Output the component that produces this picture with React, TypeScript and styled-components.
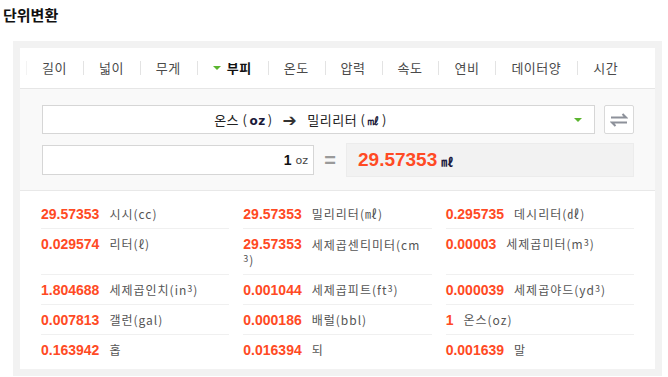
import React from 'react'
import styled, { createGlobalStyle } from 'styled-components'

const GlobalStyle = createGlobalStyle`
body {
  margin: 0;
  background: #fff;
  font-family: "Noto Sans CJK KR", "Liberation Sans", sans-serif;
  color: #333;
}
`

const Sup = styled.sup`
font-size: 9px;
line-height: 0;
vertical-align: 3px;
`

interface Result {
  value: string;
  label: React.ReactNode;
  wraps?: boolean;
}

const tabs = ['길이', '넓이', '무게', '부피', '온도', '압력', '속도', '연비', '데이터양', '시간']

const results: Result[] = [
  { value: '29.57353', label: '시시(cc)' },
  { value: '29.57353', label: '밀리리터(㎖)' },
  { value: '0.295735', label: '데시리터(㎗)' },
  { value: '0.029574', label: '리터(ℓ)' },
  { value: '29.57353', label: <>세제곱센티미터(cm<br /><Sup>3</Sup>)</>, wraps: true },
  { value: '0.00003', label: <>세제곱미터(m<Sup>3</Sup>)</> },
  { value: '1.804688', label: <>세제곱인치(in<Sup>3</Sup>)</> },
  { value: '0.001044', label: <>세제곱피트(ft<Sup>3</Sup>)</> },
  { value: '0.000039', label: <>세제곱야드(yd<Sup>3</Sup>)</> },
  { value: '0.007813', label: '갤런(gal)' },
  { value: '0.000186', label: '배럴(bbl)' },
  { value: '1', label: '온스(oz)' },
  { value: '0.163942', label: '홉' },
  { value: '0.016394', label: '되' },
  { value: '0.001639', label: '말' },
]

const SwapIcon = () => (
  <svg width="18" height="14" viewBox="0 0 18 14" fill="none">
    <path d="M1 4.5H16L12.5 1" stroke="#8d919a" strokeWidth="2" />
    <path d="M17 9.5H2L5.5 13" stroke="#8d919a" strokeWidth="2" />
  </svg>
)

const App: React.FC = () => {
  const lastRow = results.length - 3
  return (
    <>
      <GlobalStyle />
      <Title>단위변환</Title>
      <Frame>
        <Panel>
          <TabBar>
            {tabs.map((t, i) => (
              <Tab key={t} $active={t === '부피'} $first={i === 0}>
                {t === '부피' && <Caret />}
                {t}
              </Tab>
            ))}
          </TabBar>

          <Converter>
            <SelectRow>
              <Select>
                <span>온스 (<b>oz</b>)</span>
                <Arrow>➔</Arrow>
                <span>밀리리터 (<b>㎖</b>)</span>
                <SelectCaret />
              </Select>
              <SwapButton>
                <SwapIcon />
              </SwapButton>
            </SelectRow>
            <InputRow>
              <Input>
                <InputNum>1</InputNum>
                <InputUnit>oz</InputUnit>
              </Input>
              <Equals>=</Equals>
              <ResultBox>
                <ResultNum>29.57353</ResultNum>
                <ResultUnit>㎖</ResultUnit>
              </ResultBox>
            </InputRow>
          </Converter>

          <ResultGrid>
            {results.map((r, i) => (
              <Cell key={i} $last={i >= lastRow}>
                <Num>{r.value}</Num>
                <Label $wraps={r.wraps}>{r.label}</Label>
              </Cell>
            ))}
          </ResultGrid>
        </Panel>
      </Frame>
    </>
  )
}

export default App

const Title = styled.h2`
margin: 0;
padding: 6px 0 0 3px;
font-size: 15px;
line-height: 18px;
font-weight: bold;
color: #111;
`

const Frame = styled.div`
margin: 17px 6px 0 13px;
padding: 7px;
background: #f2f2f2;
`

const Panel = styled.div`
background: #fff;
`

const TabBar = styled.ul`
list-style: none;
margin: 0;
padding: 0 0 0 6px;
height: 40px;
display: flex;
align-items: center;
border-bottom: 1px solid #e6e6e6;
`

const Tab = styled.li<{ $active?: boolean; $first?: boolean }>`
display: flex;
align-items: center;
padding: 0 16px 0 15px;
height: 14px;
line-height: 14px;
font-size: 13px;
letter-spacing: 0.5px;
color: ${p => (p.$active ? '#111' : '#4a4a4a')};
font-weight: ${p => (p.$active ? 'bold' : 'normal')};
border-left: 1px solid ${p => (p.$first ? '#f3f3f3' : '#e3e3e3')};
`

const Caret = styled.i`
width: 0;
height: 0;
margin-right: 6px;
border-left: 4px solid transparent;
border-right: 4px solid transparent;
border-top: 4px solid #5bb52f;
`

const Converter = styled.div`
background: #f9f9f9;
border-bottom: 1px solid #e8e8e8;
padding: 16px 21px 13px 22px;
`

const SelectRow = styled.div`
display: flex;
gap: 9px;
`

const Select = styled.div`
position: relative;
flex: 1;
height: 29px;
box-sizing: border-box;
border: 1px solid #d6d6d6;
background: #fff;
display: flex;
align-items: center;
justify-content: center;
gap: 8px;
padding-right: 36px;
font-size: 13px;
color: #222;
letter-spacing: 0.5px;

b {
  font-family: "DejaVu Sans", sans-serif;
  font-size: 12px;
  color: #1a1a3a;
  margin: 0 2px;
}
`

const Arrow = styled.span`
font-family: "DejaVu Sans", sans-serif;
font-size: 17px;
font-weight: bold;
color: #333;
margin: 0 2px;
`

const SelectCaret = styled.i`
position: absolute;
right: 12px;
top: 12px;
width: 0;
height: 0;
border-left: 4px solid transparent;
border-right: 4px solid transparent;
border-top: 4px solid #5bb52f;
`

const SwapButton = styled.div`
width: 30px;
height: 29px;
box-sizing: border-box;
border: 1px solid #d9d9d9;
border-radius: 2px;
background: #fff;
display: flex;
align-items: center;
justify-content: center;
`

const InputRow = styled.div`
display: flex;
align-items: center;
margin-top: 9px;
`

const Input = styled.div`
width: 272px;
height: 30px;
box-sizing: border-box;
border: 1px solid #d6d6d6;
background: #fff;
display: flex;
align-items: center;
justify-content: flex-end;
padding-right: 5px;
gap: 4px;
`

const InputNum = styled.span`
font-family: "Liberation Sans", sans-serif;
font-weight: bold;
font-size: 14px;
color: #111;
`

const InputUnit = styled.span`
font-family: "DejaVu Sans", sans-serif;
font-size: 11px;
color: #444;
`

const Equals = styled.span`
width: 32px;
text-align: center;
font-family: "Liberation Sans", sans-serif;
font-weight: bold;
font-size: 20px;
color: #9a9a9a;
`

const ResultBox = styled.div`
flex: 1;
height: 34px;
background: #f2f2f2;
border: 1px solid #ececec;
box-sizing: border-box;
display: flex;
align-items: center;
padding-left: 11px;
gap: 4px;
`

const ResultNum = styled.span`
font-family: "Liberation Sans", sans-serif;
font-weight: bold;
font-size: 19px;
color: #ff4a24;
`

const ResultUnit = styled.span`
font-size: 12px;
font-weight: bold;
color: #1c1c40;
margin-top: 3px;
`

const ResultGrid = styled.div`
display: grid;
grid-template-columns: repeat(3, 1fr);
column-gap: 14px;
padding: 8px 21px 4px 21px;
`

const Cell = styled.div<{ $last?: boolean }>`
padding: 8px 0 7px 0;
font-size: 12px;
line-height: 14px;
border-bottom: 1px solid ${p => (p.$last ? 'transparent' : '#f0f0f0')};
`

const Num = styled.span`
font-family: "Liberation Sans", sans-serif;
font-weight: bold;
font-size: 14px;
line-height: 14px;
vertical-align: top;
color: #ff4a24;
margin-right: 10px;
`

const Label = styled.span<{ $wraps?: boolean }>`
font-size: 12px;
line-height: ${p => (p.$wraps ? '15px' : '14px')};
vertical-align: top;
color: #555;
letter-spacing: 1px;
`
